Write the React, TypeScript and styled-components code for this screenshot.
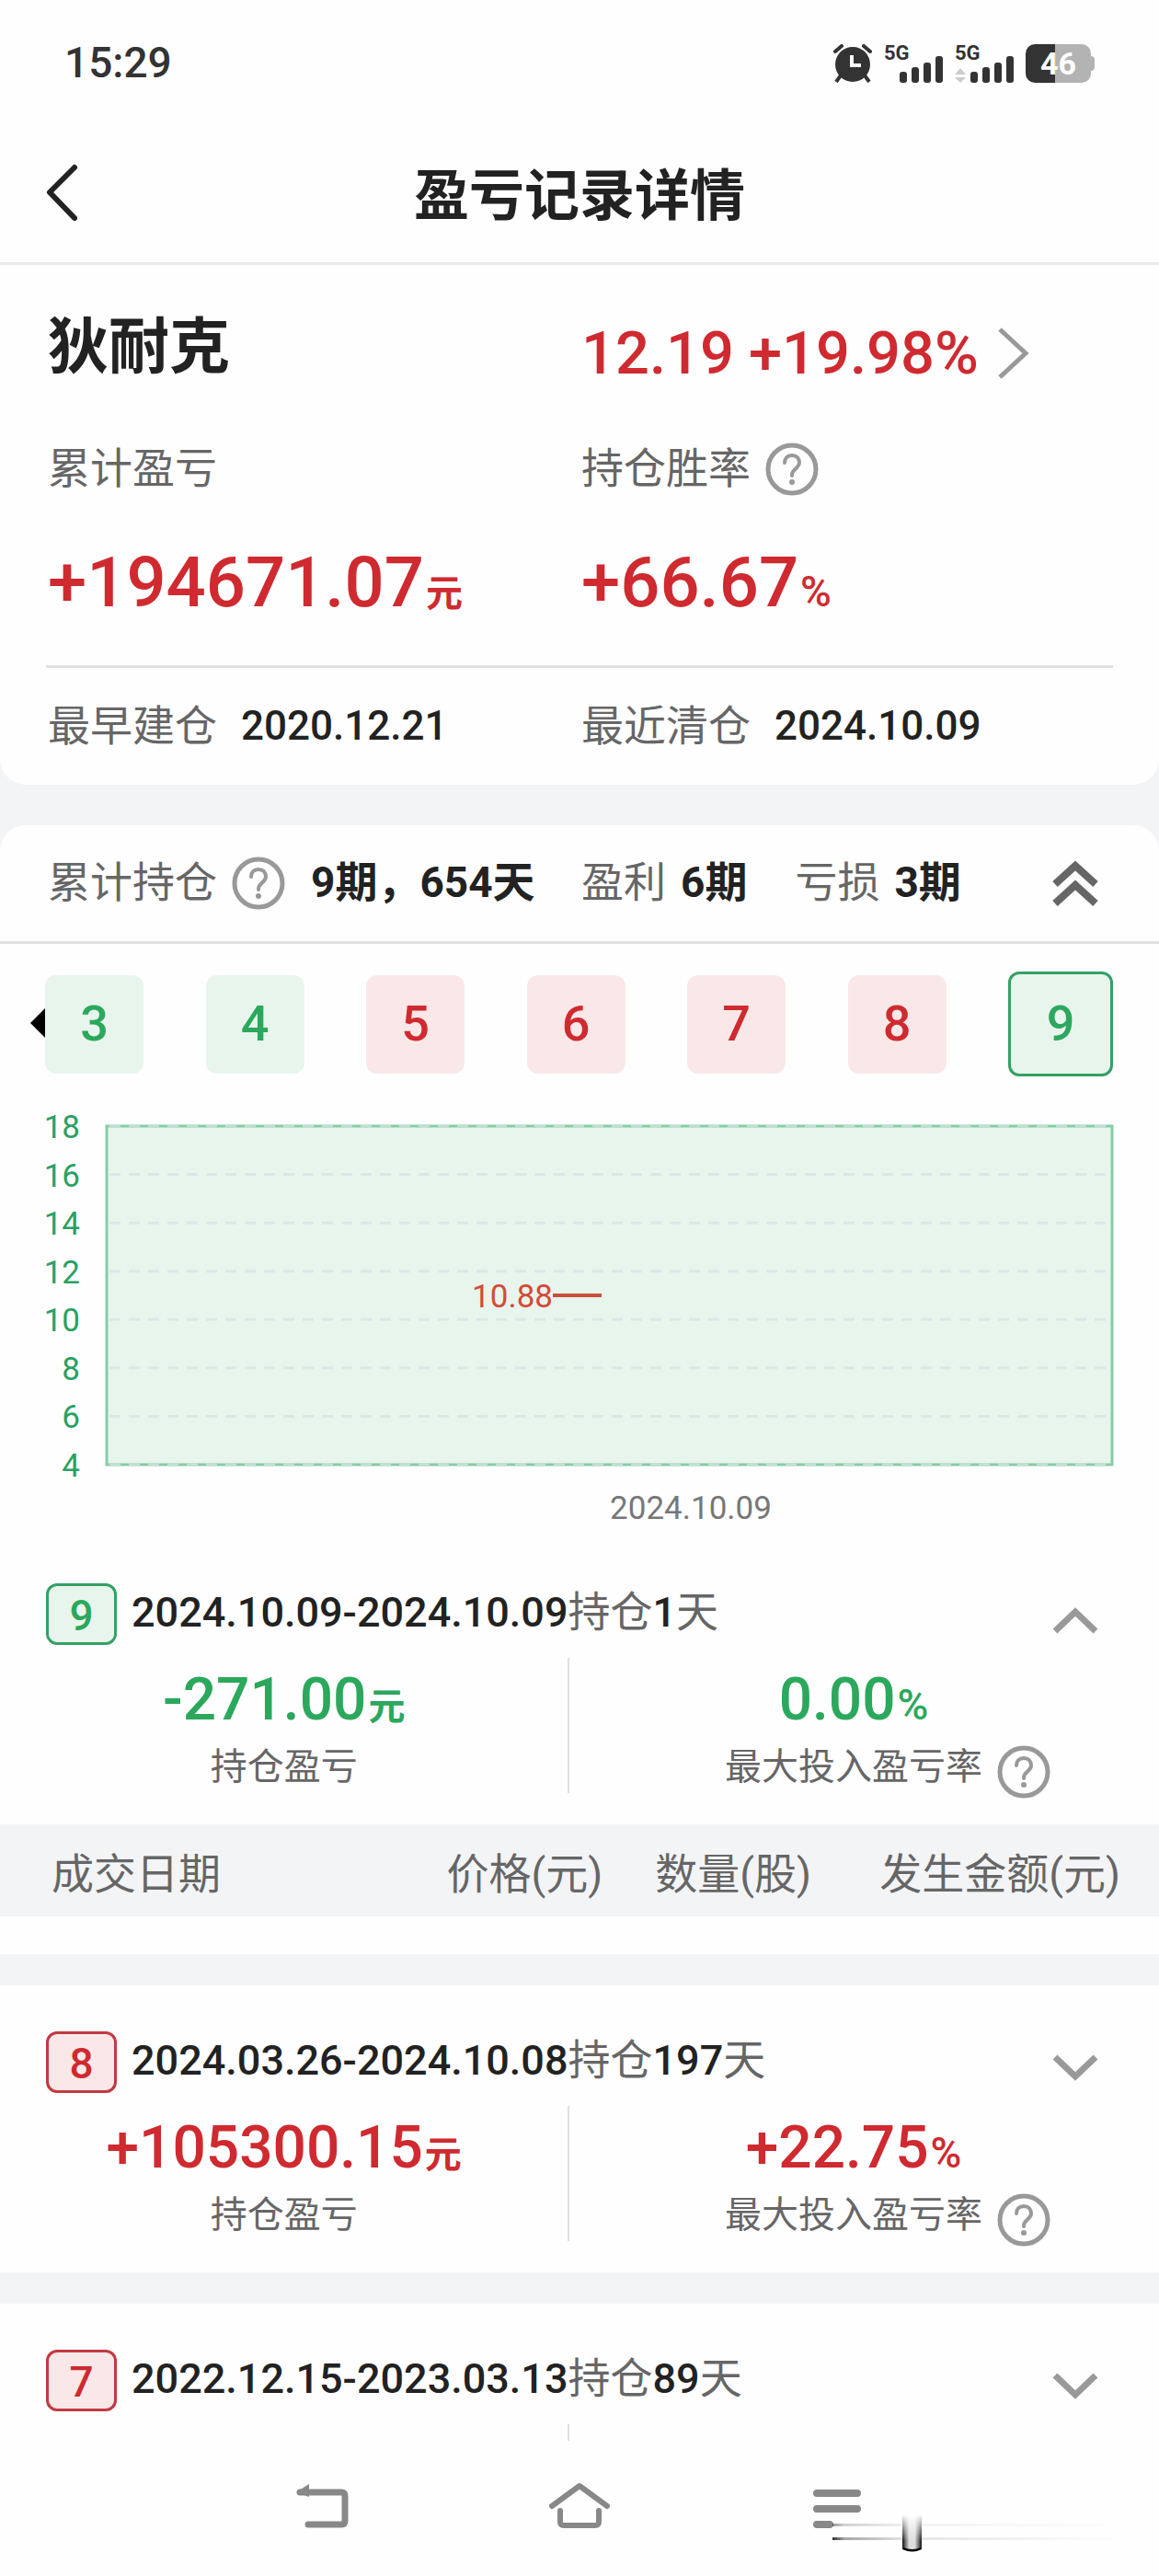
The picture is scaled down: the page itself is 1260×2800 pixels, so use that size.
import React from "react";
import styled, { createGlobalStyle } from "styled-components";

type Tone = "up" | "down";

const tones = {
  up: { text: "#cf2a30", fill: "#fae8e8", border: "#c23a42" },
  down: { text: "#2ba85c", fill: "#e7f5ec", border: "#35a065" },
};

const GlobalStyle = createGlobalStyle`
  * { box-sizing: border-box; }
  body {
    margin: 0;
    background: #fefefe;
    color: #222;
    font-family: Roboto, "Noto Sans CJK SC", sans-serif;
    line-height: 1.2;
  }
  button {
    margin: 0;
    padding: 0;
    border: 0;
    background: none;
    color: inherit;
    font: inherit;
    cursor: pointer;
  }
  svg { display: block; }
`;

const Screen = styled.div`
  display: flex;
  flex-direction: column;
  height: 100vh;
`;

const StatusBar = styled.div`
  flex: none;
  display: flex;
  align-items: center;
  justify-content: space-between;
  height: 138px;
  padding: 0 70px;
  color: #333;
`;

const Clock = styled.time`
  font-size: 46px;
  font-weight: 500;
`;

const StatusIcons = styled.div`
  display: flex;
  align-items: center;
  gap: 12px;
`;

const SignalSvg = styled.svg`
  overflow: visible;
  font-size: 22px;
  font-weight: 700;
`;

const Battery = styled.span`
  position: relative;
  width: 71px;
  height: 42px;
  margin-right: 4px;
  border-radius: 10px;
  background: linear-gradient(to right, #333 45%, #b3b3b3 45%);
  color: #fff;
  font-size: 34px;
  font-weight: 700;
  line-height: 42px;
  text-align: center;
  &::after {
    content: "";
    position: absolute;
    right: -4px;
    top: 13px;
    width: 4px;
    height: 16px;
    border-radius: 0 4px 4px 0;
    background: #b3b3b3;
  }
`;

const TitleBar = styled.header`
  flex: none;
  display: grid;
  grid-template-columns: 1fr auto 1fr;
  align-items: center;
  height: 150px;
  padding: 0 50px 4px;
  border-bottom: 3px solid #ebebeb;
`;

const Title = styled.h1`
  margin: 0;
  padding-top: 8px;
  font-size: 60px;
  font-weight: 700;
  line-height: 80px;
`;

const Content = styled.main`
  flex: 1;
  min-height: 0;
  overflow: hidden;
  background: #f3f4f6;
`;

const Summary = styled.section`
  padding: 40px 50px 0;
  border-radius: 0 0 28px 28px;
  background: #fefefe;
`;

const SummaryGrid = styled.div`
  display: grid;
  grid-template-columns: 1fr 1fr;
  grid-template-rows: 112px 140px 102px;
  padding-bottom: 41px;
  border-bottom: 3px solid #e0e0e0;
  > * {
    padding-left: 2px;
  }
`;

const StockName = styled.h2`
  margin: 0;
  font-size: 66px;
  font-weight: 700;
  line-height: 100px;
`;

const Quote = styled.a`
  display: flex;
  align-items: center;
  gap: 20px;
  height: 112px;
  color: ${tones.up.text};
  font-size: 65px;
  font-weight: 500;
  text-decoration: none;
  white-space: nowrap;
`;

const Label = styled.span`
  display: flex;
  align-items: center;
  gap: 16px;
  color: #666;
  font-size: 46px;
  white-space: nowrap;
`;

const Amount = styled.span<{ $tone: Tone; $large?: boolean }>`
  color: ${(p) => tones[p.$tone].text};
  font-size: ${(p) => (p.$large ? 76 : 64)}px;
  font-weight: 500;
  line-height: ${(p) => (p.$large ? 106 : 92)}px;
  white-space: nowrap;
`;

const Unit = styled.span`
  margin-left: 2px;
  font-size: 40px;
  font-weight: 700;
  line-height: 1;
`;

const Percent = styled(Unit)`
  font-size: 46px;
  font-weight: 500;
`;

const DateGrid = styled.div`
  display: grid;
  grid-template-columns: 1fr 1fr;
  height: 127px;
`;

const DateCell = styled.div`
  display: flex;
  align-items: center;
  gap: 26px;
  padding-left: 2px;
`;

const DateText = styled.time`
  font-size: 44px;
  font-weight: 500;
`;

const Positions = styled.section`
  margin-top: 44px;
  border-radius: 28px 28px 0 0;
  background: #fefefe;
`;

const Totals = styled.div`
  display: grid;
  grid-template-columns: 1fr 1fr;
  height: 129px;
  padding: 0 50px;
  border-bottom: 3px solid #e0e0e0;
`;

const TotalsGroup = styled.div`
  display: flex;
  align-items: center;
  gap: 28px;
  padding-left: 2px;
`;

const Count = styled.span`
  display: flex;
  align-items: center;
  gap: 16px;
  color: #666;
  font-size: 46px;
  white-space: nowrap;
  & + & {
    margin-left: 24px;
  }
`;

const Strong = styled.span`
  color: #222;
  font-size: 46px;
  font-weight: 700;
  white-space: nowrap;
`;

const CollapseButton = styled.button`
  margin: 0 16px 0 auto;
`;

const Chips = styled.nav`
  position: relative;
  display: flex;
  align-items: center;
  justify-content: space-between;
  padding: 30px 50px 0 49px;
`;

const Chip = styled.button<{ $tone: Tone; $active?: boolean }>`
  width: ${(p) => (p.$active ? 114 : 107)}px;
  height: ${(p) => (p.$active ? 114 : 107)}px;
  border: ${(p) => (p.$active ? `3px solid ${tones[p.$tone].border}` : "0")};
  border-radius: 12px;
  background: ${(p) => tones[p.$tone].fill};
  color: ${(p) => tones[p.$tone].text};
  font-size: 54px;
  font-weight: 500;
`;

const ScrollHint = styled.span`
  position: absolute;
  left: 33px;
  top: 70px;
  border: 16px solid transparent;
  border-left: 0;
  border-right-color: #000;
`;

const ChartSvg = styled.svg`
  width: 100%;
  height: auto;
  font-size: 35px;
`;

const Period = styled.article`
  display: flow-root;
  margin-bottom: 34px;
  background: #fefefe;
`;

const PeriodHead = styled.div`
  display: flex;
  align-items: center;
  height: 117px;
  padding: 50px 66px 0 50px;
`;

const Badge = styled.span<{ $tone: Tone }>`
  width: 77px;
  height: 67px;
  margin-right: 16px;
  border: 3px solid ${(p) => tones[p.$tone].border};
  border-radius: 12px;
  background: ${(p) => tones[p.$tone].fill};
  color: ${(p) => tones[p.$tone].text};
  font-size: 46px;
  font-weight: 500;
  line-height: 64px;
  text-align: center;
`;

const PeriodTitle = styled.h3`
  margin: 0;
  padding-bottom: 4px;
  font-size: 45px;
  font-weight: 500;
  line-height: 60px;
  white-space: nowrap;
`;

const Held = styled.span`
  color: #666;
  font-size: 46px;
  font-weight: 400;
`;

const ToggleButton = styled.button`
  align-self: flex-end;
  margin: 0 0 12px auto;
`;

const Stats = styled.div`
  display: grid;
  grid-template-columns: 49% 2px 49%;
  padding: 14px 0 25px;
`;

const Stat = styled.div`
  display: flex;
  flex-direction: column;
  align-items: center;
`;

const Divider = styled.span`
  height: 147px;
  background: #e0e0e0;
`;

const StatLabel = styled.span`
  display: grid;
  grid-template-columns: 1fr auto 1fr;
  width: 100%;
  height: 64px;
  color: #666;
  font-size: 40px;
  line-height: 54px;
  white-space: nowrap;
`;

const StatLabelText = styled.span`
  grid-column: 2;
`;

const HelpButton = styled.button`
  flex: none;
  width: 58px;
  height: 58px;
`;

const StatHelp = styled(HelpButton)`
  margin: 3px 0 0 16px;
`;

const Trades = styled.table`
  width: 100%;
  margin-bottom: 41px;
  border-collapse: collapse;
  table-layout: fixed;
  background: #f3f4f6;
  line-height: normal;
`;

const TradeHead = styled.th<{ $width: number; $first?: boolean; $last?: boolean }>`
  width: ${(p) => p.$width}%;
  height: 100px;
  padding: 0 ${(p) => (p.$last ? 42 : 0)}px 0 ${(p) => (p.$first ? 56 : 0)}px;
  color: #666;
  font-size: 46px;
  font-weight: 400;
  text-align: ${(p) => (p.$first ? "left" : "right")};
  white-space: nowrap;
`;

const SystemNav = styled.nav`
  position: relative;
  flex: none;
  display: flex;
  justify-content: center;
  height: 147px;
  padding-bottom: 8px;
`;

const NavButton = styled.button`
  display: flex;
  align-items: center;
  justify-content: center;
  width: 280px;
`;

const Smear = styled.svg`
  position: absolute;
  right: 0;
  bottom: 0;
`;

function HelpIcon() {
  return (
    <svg width="58" height="58" viewBox="0 0 58 58" fill="none" stroke="#999" strokeLinecap="round">
      <circle cx="29" cy="29" r="26" strokeWidth="5" />
      <path d="M21 22c0-5 3-8 8-8s8 3 8 8c0 6-8 7-8 13v1" strokeWidth="4" />
      <circle cx="29" cy="43" r="3" fill="#999" stroke="none" />
    </svg>
  );
}

function AlarmIcon() {
  return (
    <svg width="44" height="42" viewBox="0 0 44 42" fill="none" stroke="#333">
      <circle cx="22" cy="22" r="19" fill="#333" stroke="none" />
      <path d="M3 8l7-6M41 8l-7-6" strokeWidth="4" strokeLinecap="round" />
      <path d="M9 34l-5 7M35 34l5 7" strokeWidth="4" />
      <path d="M21 12v11h10" stroke="#fff" strokeWidth="4" />
    </svg>
  );
}

function Signal({ data }: { data?: boolean }) {
  return (
    <SignalSvg width="65" height="42" viewBox="0 0 65 42" fill="#333">
      <text x="0" y="17">5G</text>
      {[
        [17, 30],
        [30, 25],
        [43, 20],
        [56, 13],
      ].map(([x, y]) => (
        <rect key={x} x={x} y={y} width="8" height={42 - y} rx="3" />
      ))}
      {data && <path d="M0 33l6-7 6 7zM0 36h12l-6 6z" fill="#ccc" />}
    </SignalSvg>
  );
}

function Chevron({ open }: { open?: boolean }) {
  return (
    <svg width="50" height="30" viewBox="0 0 50 30" fill="none" stroke="#999" strokeWidth="7">
      <path d={open ? "M3 27L25 6l22 21" : "M3 3l22 21L47 3"} />
    </svg>
  );
}

const TICKS = [18, 16, 14, 12, 10, 8, 6, 4];
const PLOT = { left: 116, right: 1209, top: 54, bottom: 422 };

function priceY(value: number) {
  return PLOT.bottom - ((value - 4) / 14) * (PLOT.bottom - PLOT.top);
}

function PriceChart() {
  return (
    <ChartSvg viewBox="0 0 1260 501" role="img" aria-label="2024.10.09">
      <rect
        x={PLOT.left}
        y={PLOT.top}
        width={PLOT.right - PLOT.left}
        height={PLOT.bottom - PLOT.top}
        fill="#e7f5ec"
        stroke="#86cda5"
        strokeWidth="3"
      />
      {TICKS.map((tick) => (
        <React.Fragment key={tick}>
          <line
            x1={PLOT.left + 3}
            x2={PLOT.right}
            y1={priceY(tick)}
            y2={priceY(tick)}
            stroke={tick === 18 || tick === 4 ? "#c3dfd1" : "#dbe7e7"}
            strokeWidth="3"
            strokeDasharray="12 9"
          />
          <text x="87" y={priceY(tick) + 13} textAnchor="end" fill="#2ba063">
            {tick}
          </text>
        </React.Fragment>
      ))}
      <text x="601" y="251" textAnchor="end" fill="#d5493a">10.88</text>
      <line x1="601" x2="654" y1="238" y2="238" stroke="#c9503f" strokeWidth="4" />
      <text x="751" y="481" textAnchor="middle" fill="#777">2024.10.09</text>
    </ChartSvg>
  );
}

interface PeriodData {
  no: number;
  tone: Tone;
  range: string;
  days: number;
  profit?: string;
  rate?: string;
  open?: boolean;
}

const periods: PeriodData[] = [
  { no: 9, tone: "down", range: "2024.10.09-2024.10.09", days: 1, profit: "-271.00", rate: "0.00", open: true },
  { no: 8, tone: "up", range: "2024.03.26-2024.10.08", days: 197, profit: "+105300.15", rate: "+22.75" },
  { no: 7, tone: "up", range: "2022.12.15-2023.03.13", days: 89 },
];

const chips: { no: number; tone: Tone }[] = [
  { no: 3, tone: "down" },
  { no: 4, tone: "down" },
  { no: 5, tone: "up" },
  { no: 6, tone: "up" },
  { no: 7, tone: "up" },
  { no: 8, tone: "up" },
  { no: 9, tone: "down" },
];

function PeriodCard({ item }: { item: PeriodData }) {
  return (
    <Period>
      <PeriodHead>
        <Badge $tone={item.tone}>{item.no}</Badge>
        <PeriodTitle>
          {item.range}
          <Held>持仓</Held>
          {item.days}
          <Held>天</Held>
        </PeriodTitle>
        <ToggleButton aria-expanded={!!item.open} aria-label={`${item.no}`}>
          <Chevron open={item.open} />
        </ToggleButton>
      </PeriodHead>
      <Stats>
        <Stat>
          {item.profit && (
            <>
              <Amount $tone={item.tone}>
                {item.profit}
                <Unit>元</Unit>
              </Amount>
              <StatLabel>
                <StatLabelText>持仓盈亏</StatLabelText>
              </StatLabel>
            </>
          )}
        </Stat>
        <Divider />
        <Stat>
          {item.rate && (
            <>
              <Amount $tone={item.tone}>
                {item.rate}
                <Percent>%</Percent>
              </Amount>
              <StatLabel>
                <StatLabelText>最大投入盈亏率</StatLabelText>
                <StatHelp aria-label="最大投入盈亏率">
                  <HelpIcon />
                </StatHelp>
              </StatLabel>
            </>
          )}
        </Stat>
      </Stats>
      {item.open && (
        <Trades>
          <thead>
            <tr>
              <TradeHead scope="col" $width={24} $first>成交日期</TradeHead>
              <TradeHead scope="col" $width={28}>价格(元)</TradeHead>
              <TradeHead scope="col" $width={18}>数量(股)</TradeHead>
              <TradeHead scope="col" $width={30} $last>发生金额(元)</TradeHead>
            </tr>
          </thead>
        </Trades>
      )}
    </Period>
  );
}

export default function App() {
  return (
    <Screen>
      <GlobalStyle />
      <StatusBar>
        <Clock>15:29</Clock>
        <StatusIcons>
          <AlarmIcon />
          <Signal />
          <Signal data />
          <Battery>46</Battery>
        </StatusIcons>
      </StatusBar>
      <TitleBar>
        <button aria-label="返回">
          <svg width="36" height="64" viewBox="0 0 36 64" fill="none" stroke="#222" strokeWidth="6" strokeLinecap="round" strokeLinejoin="round">
            <path d="M31 4L4 31l27 28" />
          </svg>
        </button>
        <Title>盈亏记录详情</Title>
      </TitleBar>
      <Content>
        <Summary>
          <SummaryGrid>
            <StockName>狄耐克</StockName>
            <Quote href="#quote">
              12.19 +19.98%
              <svg width="36" height="56" viewBox="0 0 36 56" fill="none" stroke="#999" strokeWidth="5">
                <path d="M3 2l28 26L3 54" />
              </svg>
            </Quote>
            <Label>累计盈亏</Label>
            <Label>
              持仓胜率
              <HelpButton aria-label="持仓胜率">
                <HelpIcon />
              </HelpButton>
            </Label>
            <Amount $tone="up" $large>
              +194671.07<Unit>元</Unit>
            </Amount>
            <Amount $tone="up" $large>
              +66.67<Percent>%</Percent>
            </Amount>
          </SummaryGrid>
          <DateGrid>
            <DateCell>
              <Label>最早建仓</Label>
              <DateText>2020.12.21</DateText>
            </DateCell>
            <DateCell>
              <Label>最近清仓</Label>
              <DateText>2024.10.09</DateText>
            </DateCell>
          </DateGrid>
        </Summary>
        <Positions>
          <Totals>
            <TotalsGroup>
              <Label>
                累计持仓
                <HelpButton aria-label="累计持仓">
                  <HelpIcon />
                </HelpButton>
              </Label>
              <Strong>9期，654天</Strong>
            </TotalsGroup>
            <TotalsGroup>
              <Count>
                盈利<Strong>6期</Strong>
              </Count>
              <Count>
                亏损<Strong>3期</Strong>
              </Count>
              <CollapseButton aria-label="收起">
                <svg width="50" height="50" viewBox="0 0 50 50" fill="none" stroke="#666" strokeWidth="8">
                  <path d="M3 26L25 6l22 20M3 47l22-20 22 20" />
                </svg>
              </CollapseButton>
            </TotalsGroup>
          </Totals>
          <Chips>
            <ScrollHint />
            {chips.map((chip) => (
              <Chip key={chip.no} $tone={chip.tone} $active={chip.no === 9}>
                {chip.no}
              </Chip>
            ))}
          </Chips>
          <PriceChart />
        </Positions>
        {periods.map((item) => (
          <PeriodCard key={item.no} item={item} />
        ))}
      </Content>
      <SystemNav>
        <NavButton aria-label="返回">
          <svg width="58" height="50" viewBox="0 0 58 50" fill="none" stroke="#888" strokeWidth="7" strokeLinecap="round" strokeLinejoin="round">
            <path d="M5 11h45q4 0 4 4v27q0 4-4 4H14" />
            <path d="M15 2v14L1 11z" fill="#888" stroke="none" />
          </svg>
        </NavButton>
        <NavButton aria-label="主页">
          <svg width="68" height="50" viewBox="0 0 68 50" fill="none" stroke="#888" strokeWidth="6" strokeLinecap="round" strokeLinejoin="round">
            <path d="M4 26L34 4l30 22" />
            <path d="M13 31v12q0 4 4 4h34q4 0 4-4V31" />
          </svg>
        </NavButton>
        <NavButton aria-label="最近任务">
          <svg width="52" height="50" viewBox="0 0 52 50" stroke="#888" strokeWidth="8" strokeLinecap="round">
            <path d="M4 12h44M4 29h44M4 46h14" />
          </svg>
        </NavButton>
        <Smear width="360" height="70" viewBox="0 0 360 70" aria-hidden="true">
          <defs>
            <linearGradient id="streak">
              <stop offset="0" stopColor="#000" stopOpacity="0.8" />
              <stop offset="0.04" stopColor="#000" stopOpacity="0.35" />
              <stop offset="0.25" stopColor="#000" stopOpacity="0.1" />
              <stop offset="1" stopColor="#000" stopOpacity="0" />
            </linearGradient>
            <linearGradient id="tube">
              <stop offset="0" stopColor="#111" />
              <stop offset="0.35" stopColor="#ddd" />
              <stop offset="0.65" stopColor="#ddd" />
              <stop offset="1" stopColor="#111" />
            </linearGradient>
            <linearGradient id="fade" x2="0" y2="1">
              <stop offset="0" stopColor="#fefefe" />
              <stop offset="0.8" stopColor="#fefefe" stopOpacity="0" />
            </linearGradient>
          </defs>
          <rect x="5" y="13" width="320" height="3" fill="url(#streak)" opacity="0.5" />
          <rect x="5" y="28" width="320" height="3" fill="url(#streak)" />
          <path d="M81 4h21v37q-10 5-21 0z" fill="url(#tube)" />
          <rect x="80" y="3" width="23" height="36" fill="url(#fade)" />
          <path d="M82 39q10 4 19 0v2q-9 5-19 0z" fill="#000" />
        </Smear>
      </SystemNav>
    </Screen>
  );
}
